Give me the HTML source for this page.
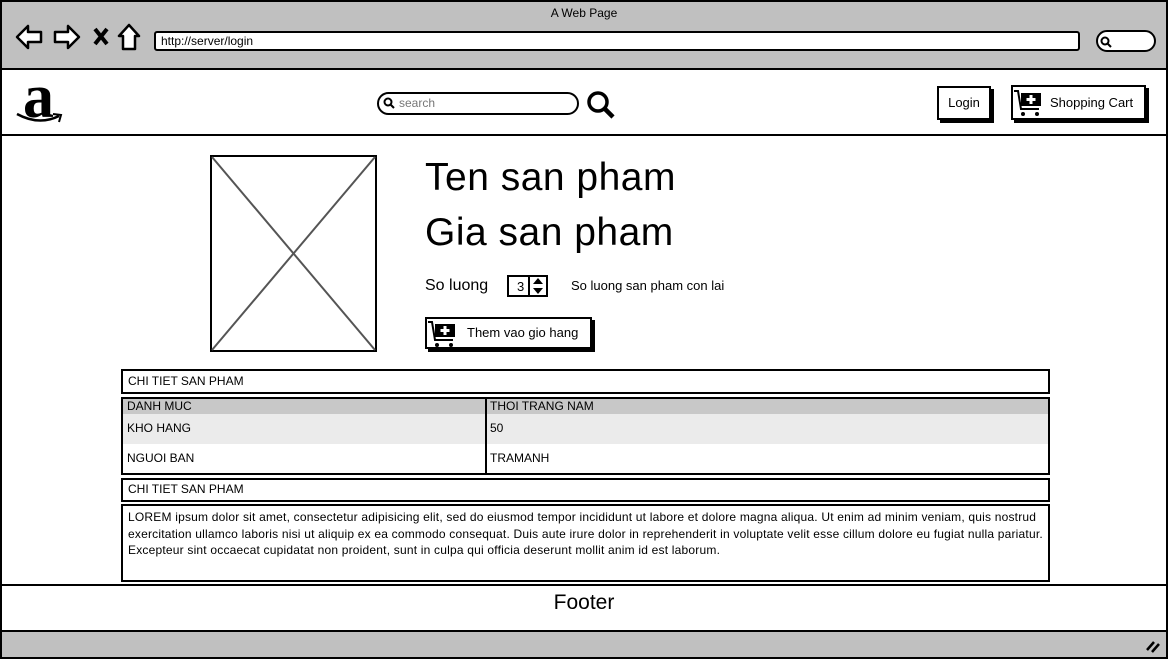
<!DOCTYPE html><html><head><style>
*{margin:0;padding:0;box-sizing:border-box}
body{width:1168px;height:659px;position:relative;background:#fff;font-family:"Liberation Sans",sans-serif;color:#000;overflow:hidden}
.a{position:absolute}
.b{border:2px solid #000}
.t{font-size:12px}
</style></head><body>
<div class="a b" style="left:0;top:0;width:1168px;height:659px;border-width:2px"></div>
<div class="a" style="left:2px;top:2px;width:1164px;height:66px;background:#c0c0c0"></div>
<div class="a" style="left:0;top:6px;width:1168px;text-align:center;font-size:12px">A Web Page</div>
<svg class="a" style="left:14px;top:22px" width="130" height="30" viewBox="0 0 130 30">
<path d="M3 15 L14 4 L14 10 L27 10 L27 20 L14 20 L14 26 Z" fill="#fff" stroke="#000" stroke-width="2.5" stroke-linejoin="round"/>
<path d="M65 15 L54 4 L54 10 L41 10 L41 20 L54 20 L54 26 Z" fill="#fff" stroke="#000" stroke-width="2.5" stroke-linejoin="round"/>
<path d="M81 7 L93 22 M93 7 L81 22" stroke="#000" stroke-width="4"/>
<path d="M115 3 L105 14 L109 14 L109 27 L121 27 L121 14 L125 14 Z" fill="#fff" stroke="#000" stroke-width="2.5" stroke-linejoin="round"/>
</svg>
<div class="a b" style="left:154px;top:31px;width:926px;height:20px;background:#fff;border-radius:3px;font-size:12px;padding:1px 5px">http://server/login</div>
<div class="a b" style="left:1096px;top:30px;width:60px;height:22px;background:#fff;border-radius:11px"></div>
<svg class="a" style="left:1099px;top:35px" width="14" height="14"><circle cx="6" cy="6" r="3.5" fill="none" stroke="#000" stroke-width="2"/><path d="M8 8 L12 12" stroke="#000" stroke-width="2"/></svg>
<div class="a" style="left:2px;top:68px;width:1164px;height:2px;background:#000"></div>
<div class="a" style="left:2px;top:134px;width:1164px;height:2px;background:#000"></div>
<div class="a" style="left:23px;top:66px;font-size:62px;font-family:'Liberation Serif',serif;font-weight:bold;line-height:62px">a</div>
<svg class="a" style="left:15px;top:110px" width="50" height="18"><path d="M2 4 Q24 16 44 6" fill="none" stroke="#000" stroke-width="2.5"/><path d="M38 4 L46 5 L44 12" fill="none" stroke="#000" stroke-width="2"/></svg>
<div class="a b" style="left:377px;top:92px;width:202px;height:23px;border-radius:12px;font-size:12px;color:#777;padding:2px 0 0 20px">search</div>
<svg class="a" style="left:382px;top:96px" width="14" height="14"><circle cx="6" cy="6" r="3.5" fill="none" stroke="#000" stroke-width="2"/><path d="M8 8 L12 12" stroke="#000" stroke-width="2"/></svg>
<svg class="a" style="left:585px;top:89px" width="32" height="30"><circle cx="13" cy="13" r="9" fill="none" stroke="#000" stroke-width="3.5"/><path d="M19 19 L28 28" stroke="#000" stroke-width="4.5"/></svg>
<div class="a" style="left:940px;top:89px;width:54px;height:34px;background:#000"></div>
<div class="a b" style="left:937px;top:86px;width:54px;height:34px;background:#fff;font-size:13px;text-align:center;line-height:30px">Login</div>
<div class="a" style="left:1014px;top:88px;width:135px;height:35px;background:#000"></div>
<div class="a b" style="left:1011px;top:85px;width:135px;height:35px;background:#fff;font-size:13px;line-height:31px;padding-left:37px">Shopping Cart</div>
<svg class="a" style="left:1013px;top:89px" width="32" height="30"><path d="M1 2 L5 2 L8 20 L26 20" fill="none" stroke="#000" stroke-width="2"/><rect x="8" y="4" width="20" height="13" fill="#000"/><path d="M18 6 V15 M13.5 10.5 H22.5" stroke="#fff" stroke-width="3"/><circle cx="10" cy="25" r="2"/><circle cx="24" cy="25" r="2"/></svg>
<svg class="a" style="left:210px;top:155px" width="167" height="197"><rect x="1" y="1" width="165" height="195" fill="#fff" stroke="#000" stroke-width="2"/><path d="M2 2 L165 195 M165 2 L2 195" stroke="#555" stroke-width="2"/></svg>
<div class="a" style="left:425px;top:156px;font-size:39px;line-height:44px;letter-spacing:0.5px">Ten san pham</div>
<div class="a" style="left:425px;top:211px;font-size:39px;line-height:44px;letter-spacing:0.5px">Gia san pham</div>
<div class="a" style="left:425px;top:277px;font-size:16px">So luong</div>
<div class="a b" style="left:507px;top:275px;width:41px;height:22px;font-size:13px;padding:2px 0 0 8px">3</div>
<div class="a" style="left:528px;top:276px;width:2px;height:20px;background:#000"></div>
<svg class="a" style="left:531px;top:277px" width="14" height="18"><path d="M2 7 L7 1 L12 7 Z M2 11 L7 17 L12 11 Z" fill="#000"/></svg>
<div class="a" style="left:571px;top:278px;font-size:13px">So luong san pham con lai</div>
<div class="a" style="left:428px;top:320px;width:167px;height:32px;background:#000"></div>
<div class="a b" style="left:425px;top:317px;width:167px;height:32px;background:#fff;font-size:13px;line-height:28px;padding-left:40px">Them vao gio hang</div>
<svg class="a" style="left:427px;top:320px" width="32" height="30"><path d="M1 2 L5 2 L8 20 L26 20" fill="none" stroke="#000" stroke-width="2"/><rect x="8" y="4" width="20" height="13" fill="#000"/><path d="M18 6 V15 M13.5 10.5 H22.5" stroke="#fff" stroke-width="3"/><circle cx="10" cy="25" r="2"/><circle cx="24" cy="25" r="2"/></svg>
<div class="a b t" style="left:121px;top:369px;width:929px;height:25px;padding:3px 5px">CHI TIET SAN PHAM</div>
<div class="a b" style="left:121px;top:397px;width:929px;height:78px;overflow:hidden">
<div style="height:15px;background:#c8c8c8"></div><div style="height:30px;background:#ebebeb"></div></div>
<div class="a" style="left:485px;top:398px;width:2px;height:76px;background:#000"></div>
<div class="a t" style="left:127px;top:399px">DANH MUC</div><div class="a t" style="left:490px;top:399px">THOI TRANG NAM</div>
<div class="a t" style="left:127px;top:421px">KHO HANG</div><div class="a t" style="left:490px;top:421px">50</div>
<div class="a t" style="left:127px;top:451px">NGUOI BAN</div><div class="a t" style="left:490px;top:451px">TRAMANH</div>
<div class="a b t" style="left:121px;top:478px;width:929px;height:24px;padding:2px 5px">CHI TIET SAN PHAM</div>
<div class="a b" style="left:121px;top:504px;width:929px;height:78px;padding:3px 5px;font-size:12px;line-height:16.5px;letter-spacing:0.2px">LOREM ipsum dolor sit amet, consectetur adipisicing elit, sed do eiusmod tempor incididunt ut labore et dolore magna aliqua. Ut enim ad minim veniam, quis nostrud exercitation ullamco laboris nisi ut aliquip ex ea commodo consequat. Duis aute irure dolor in reprehenderit in voluptate velit esse cillum dolore eu fugiat nulla pariatur. Excepteur sint occaecat cupidatat non proident, sunt in culpa qui officia deserunt mollit anim id est laborum.</div>
<div class="a b" style="left:0;top:584px;width:1168px;height:48px;background:#fff"></div>
<div class="a" style="left:0;top:591px;width:1168px;text-align:center;font-size:21px">Footer</div>
<div class="a" style="left:2px;top:632px;width:1164px;height:25px;background:#c0c0c0"></div>
<svg class="a" style="left:1145px;top:638px" width="16" height="16"><path d="M2 12 L9 4 M7 14 L14 6" stroke="#000" stroke-width="2.5"/></svg>
</body></html>
